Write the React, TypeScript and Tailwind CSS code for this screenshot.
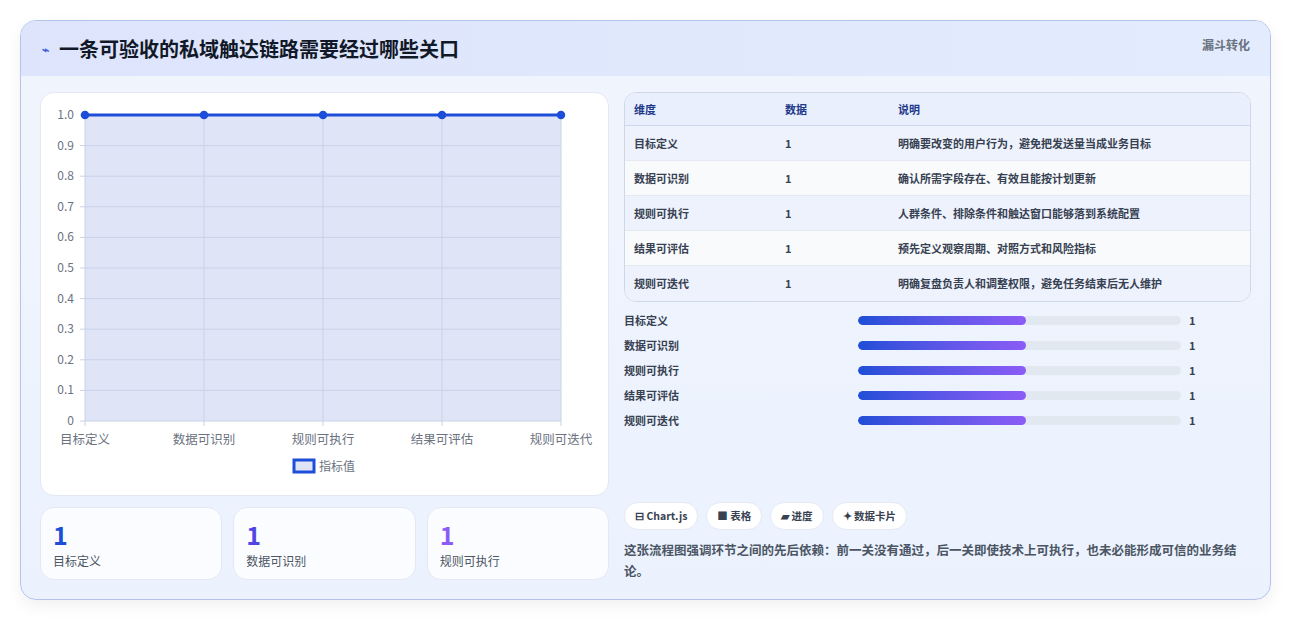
import React from "react";

const rows = [
  ["目标定义", "1", "明确要改变的用户行为，避免把发送量当成业务目标"],
  ["数据可识别", "1", "确认所需字段存在、有效且能按计划更新"],
  ["规则可执行", "1", "人群条件、排除条件和触达窗口能够落到系统配置"],
  ["结果可评估", "1", "预先定义观察周期、对照方式和风险指标"],
  ["规则可迭代", "1", "明确复盘负责人和调整权限，避免任务结束后无人维护"],
];

function Chart() {
  const x0 = 44, x1 = 520, y0 = 22, y1 = 328;
  const ticks = [1, 0.9, 0.8, 0.7, 0.6, 0.5, 0.4, 0.3, 0.2, 0.1, 0];
  const xs = [0, 1, 2, 3, 4].map((i) => x0 + ((x1 - x0) * i) / 4);
  return (
    <svg width="568" height="403" className="block" style={{ fontFamily: "'Noto Sans CJK SC', sans-serif" }}>
      <rect x={x0} y={y0} width={x1 - x0} height={y1 - y0} fill="#dfe5f7" />
      {ticks.map((t) => {
        const y = y1 - (y1 - y0) * t;
        return (
          <g key={t}>
            <line x1={x0 - 5} x2={x1} y1={y} y2={y} stroke="#c9d2e6" strokeWidth="1" />
            <text x={x0 - 11} y={y + 4} fontSize="12" fill="#6b7280" textAnchor="end">
              {t === 0 ? "0" : t.toFixed(1)}
            </text>
          </g>
        );
      })}
      {xs.map((x, i) => (
        <g key={i}>
          <line x1={x} x2={x} y1={y0} y2={y1 + 5} stroke="#c9d2e6" />
          <text x={x} y={y1 + 23} fontSize="12.5" fill="#6b7280" textAnchor="middle">
            {rows[i][0]}
          </text>
        </g>
      ))}
      <line x1={x0} x2={x1} y1={y0} y2={y0} stroke="#1d4ed8" strokeWidth="3" />
      {xs.map((x, i) => (
        <circle key={i} cx={x} cy={y0} r="3.5" fill="#1d4ed8" stroke="#1d4ed8" strokeWidth="1.5" />
      ))}
      <rect x="253" y="367" width="20" height="12" fill="#dfe5f7" stroke="#1d4ed8" strokeWidth="3" />
      <text x="278" y="378" fontSize="12" fill="#6b7280">指标值</text>
    </svg>
  );
}

export default function App() {
  return (
    <div
      className="w-[1291px] h-[621px] bg-white pt-[20px] pl-[20px]"
      style={{ fontFamily: "'Noto Sans CJK SC', 'Noto Sans', sans-serif" }}
    >
      <div className="w-[1251px] h-[580px] rounded-[16px] border border-[#b6c3ea] bg-gradient-to-b from-[#f1f5fd] to-[#ebf2fe] overflow-hidden shadow-[0_6px_16px_rgba(0,0,0,0.06)]">
        <div className="h-[55px] bg-gradient-to-r from-[#dde4fc] to-[#e3ecfd] flex items-start justify-between pl-[21px] pr-[20px]">
          <div className="flex items-center gap-[10px] mt-[14px]">
            <span className="text-[#3b5fd9] text-[12px] font-bold">⌁</span>
            <span className="text-[20px] font-bold text-[#111827] leading-[28px]">一条可验收的私域触达链路需要经过哪些关口</span>
          </div>
          <span className="mt-[15px] text-[12px] font-bold text-[#6b7280]">漏斗转化</span>
        </div>
        <div className="flex gap-[15px] px-[19px] pt-[16px]">
          <div className="w-[569px] flex flex-col gap-[11px]">
            <div className="h-[404px] bg-white rounded-[14px] border border-[#e3e8f3]">
              <Chart />
            </div>
            <div className="grid grid-cols-3 gap-[11px]">
              {[["目标定义", "text-[#1d4ed8]"], ["数据可识别", "text-[#4f46e5]"], ["规则可执行", "text-[#8b5cf6]"]].map(([l, c]) => (
                <div key={l} className="h-[73px] bg-white/80 rounded-[14px] border border-[#e3e8f3] px-[12px] pt-[12px]">
                  <div className={`text-[25px] font-bold leading-[28px] ${c}`}>1</div>
                  <div className="text-[12px] text-[#4b5563] mt-[4px]">{l}</div>
                </div>
              ))}
            </div>
          </div>
          <div className="w-[628px] flex flex-col">
            <div className="rounded-[12px] border border-[#cfd8ea] overflow-hidden bg-white">
              <div className="h-[33px] bg-[#e9effc] flex items-center text-[11px] font-bold text-[#1e3a8a] border-b border-[#cfd8ea]">
                <span className="w-[160px] pl-[9px]">维度</span>
                <span className="w-[113px]">数据</span>
                <span>说明</span>
              </div>
              {rows.map((r, i) => (
                <div key={i} className={`h-[35px] flex items-center text-[11px] font-bold text-[#374151] ${i % 2 === 0 ? "bg-[#eef2fd]" : "bg-[#f8fafc]"} ${i < 4 ? "border-b border-[#e5e9f2]" : ""}`}>
                  <span className="w-[160px] pl-[9px]">{r[0]}</span>
                  <span className="w-[113px]">{r[1]}</span>
                  <span>{r[2]}</span>
                </div>
              ))}
            </div>
            <div className="flex flex-col gap-[8px] mt-[10px]">
              {rows.map((r, i) => (
                <div key={i} className="h-[17px] flex items-center text-[11px] font-bold text-[#374151]">
                  <span className="w-[234px]">{r[0]}</span>
                  <div className="w-[323px] h-[9px] rounded-full bg-[#e2e8f0] overflow-hidden">
                    <div className="h-full w-[52%] rounded-full bg-gradient-to-r from-[#1d4ed8] to-[#8b5cf6]" />
                  </div>
                  <span className="ml-[8px]">1</span>
                </div>
              ))}
            </div>
            <div className="flex gap-[8px] mt-[73px]">
              {["⊟ Chart.js", "■ 表格", "▰ 进度", "✦ 数据卡片"].map((t) => (
                <span key={t} className="h-[28px] px-[10px] rounded-full bg-white border border-[#e5e9f2] text-[10.5px] font-bold text-[#374151] flex items-center">{t}</span>
              ))}
            </div>
            <p className="mt-[9px] text-[12.5px] font-semibold text-[#4b5563] leading-[21px] pr-[2px]">
              这张流程图强调环节之间的先后依赖：前一关没有通过，后一关即使技术上可执行，也未必能形成可信的业务结论。
            </p>
          </div>
        </div>
      </div>
    </div>
  );
}
